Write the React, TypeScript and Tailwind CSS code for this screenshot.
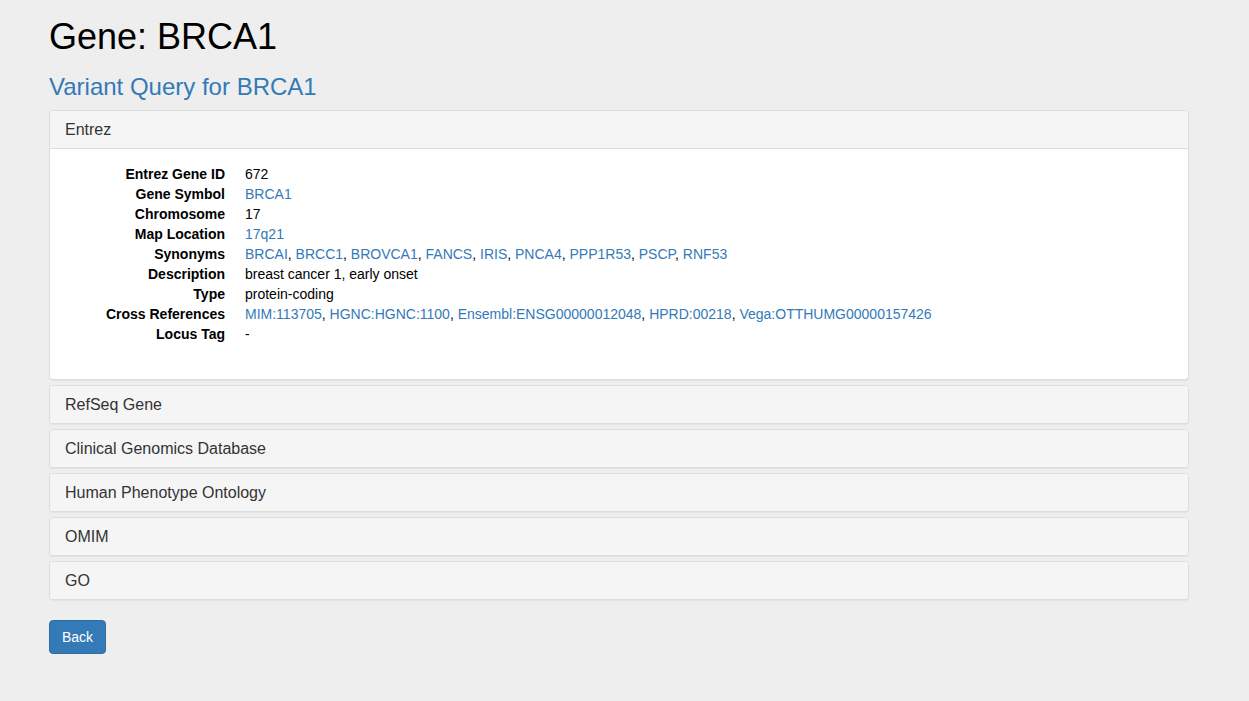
const synonyms = ["BRCAI", "BRCC1", "BROVCA1", "FANCS", "IRIS", "PNCA4", "PPP1R53", "PSCP", "RNF53"];
const crossRefs = [
  "MIM:113705",
  "HGNC:HGNC:1100",
  "Ensembl:ENSG00000012048",
  "HPRD:00218",
  "Vega:OTTHUMG00000157426",
];

const otherPanels = ["RefSeq Gene", "Clinical Genomics Database", "Human Phenotype Ontology", "OMIM", "GO"];

function LinkList({ items }: { items: string[] }) {
  return (
    <>
      {items.map((item, i) => (
        <span key={item}>
          <a href="#" className="text-[#337ab7] hover:underline">
            {item}
          </a>
          {i < items.length - 1 && ", "}
        </span>
      ))}
    </>
  );
}

function Row({ label, children }: { label: string; children: React.ReactNode }) {
  return (
    <div className="flex">
      <dt className="w-[160px] shrink-0 text-right font-bold">{label}</dt>
      <dd className="ml-[20px]">{children}</dd>
    </div>
  );
}

function PanelHeading({ title, open }: { title: string; open?: boolean }) {
  return (
    <div
      className={`bg-[#f5f5f5] px-[15px] py-[10px] text-[16px] leading-[17px] text-[#333] ${
        open ? "border-b border-[#ddd]" : ""
      }`}
    >
      {title}
    </div>
  );
}

export default function App() {
  return (
    <div className="min-h-screen bg-[#eee] text-[14px] leading-[20px] text-black font-['Liberation_Sans',Arial,sans-serif]">
      <div className="ml-[34px] w-[1170px] px-[15px]">
        <h1 className="pt-[17px] text-[36px] leading-[39.6px] font-normal">Gene: BRCA1</h1>
        <h3 className="mt-[17px] mb-[10px] text-[24px] leading-[26.4px] font-normal text-[#337ab7]">
          Variant Query for BRCA1
        </h3>

        <div className="flex flex-col gap-[5px] mb-[20px]">
          <div className="rounded-[4px] border border-[#ddd] bg-white shadow-[0_1px_1px_rgba(0,0,0,0.05)] overflow-hidden">
            <PanelHeading title="Entrez" open />
            <div className="p-[15px]">
              <dl className="mb-[20px]">
                <Row label="Entrez Gene ID">672</Row>
                <Row label="Gene Symbol">
                  <LinkList items={["BRCA1"]} />
                </Row>
                <Row label="Chromosome">17</Row>
                <Row label="Map Location">
                  <LinkList items={["17q21"]} />
                </Row>
                <Row label="Synonyms">
                  <LinkList items={synonyms} />
                </Row>
                <Row label="Description">breast cancer 1, early onset</Row>
                <Row label="Type">protein-coding</Row>
                <Row label="Cross References">
                  <LinkList items={crossRefs} />
                </Row>
                <Row label="Locus Tag">-</Row>
              </dl>
            </div>
          </div>

          {otherPanels.map((title) => (
            <div
              key={title}
              className="rounded-[4px] border border-[#ddd] bg-white shadow-[0_1px_1px_rgba(0,0,0,0.05)] overflow-hidden"
            >
              <PanelHeading title={title} />
            </div>
          ))}
        </div>

        <button className="rounded-[4px] border border-[#2e6da4] bg-[#337ab7] px-[12px] py-[6px] text-[14px] leading-[20px] text-white hover:bg-[#286090]">
          Back
        </button>
      </div>
    </div>
  );
}
